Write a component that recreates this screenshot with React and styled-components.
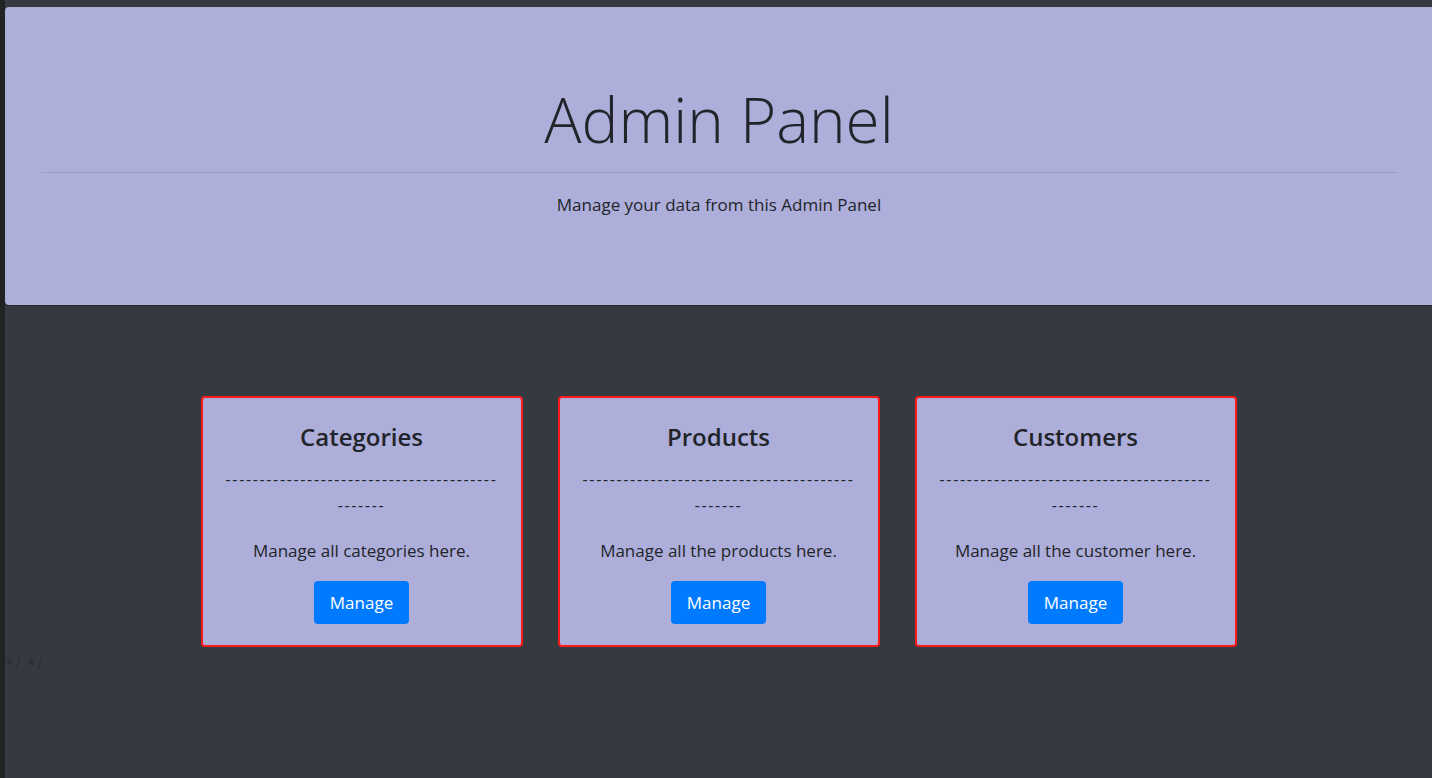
import React from "react";
import styled, { createGlobalStyle } from "styled-components";

const Global = createGlobalStyle`
  html, body { margin: 0; padding: 0; }
  body {
    background: #343a40;
    font-family: "Open Sans", "Noto Sans", sans-serif;
    color: #212529;
  }
`;

const Frame = styled.div`
  display: flex;
  min-height: 778px;
`;

const Strip = styled.div`
  width: 5px;
  flex: 0 0 5px;
  background: #222324;
`;

const Main = styled.div`
  flex: 1;
  padding-top: 7px;
  display: flex;
  flex-direction: column;
`;

const Header = styled.header`
  background: #aeaedb;
  height: 298px;
  border-radius: 4px 0 0 4px;
  box-shadow: 0 1px 0 rgba(0, 0, 0, 0.25);
  padding: 0 35px 0 36px;
  display: flex;
  flex-direction: column;
  align-items: stretch;
  text-align: center;
`;

const Title = styled.h1`
  margin: 72px 0 0;
  font-size: 62px;
  font-weight: 350;
  line-height: 1.3;
  color: #212529;
`;

const Rule = styled.hr`
  margin: 12px 0 0;
  border: 0;
  border-top: 1px solid rgba(0, 0, 0, 0.1);
`;

const Lead = styled.p`
  margin: 20px 0 0;
  font-size: 17px;
  line-height: 24px;
  color: #212529;
`;

const Cards = styled.section`
  margin-top: 91px;
  display: flex;
  justify-content: center;
  gap: 35px;
`;

const Card = styled.div`
  width: 322px;
  height: 251px;
  box-sizing: border-box;
  background: #aeaedb;
  border: 2px solid #ff1a1a;
  border-radius: 4px;
  padding: 22px 22px 0;
  display: flex;
  flex-direction: column;
  align-items: center;
  text-align: center;
`;

const CardTitle = styled.h3`
  margin: 0;
  font-size: 24px;
  font-weight: 600;
  line-height: 34px;
  color: #212529;
`;

const Dashes = styled.div`
  margin-top: 12px;
  font-size: 16px;
  line-height: 26px;
  letter-spacing: 1.65px;
  color: #212529;
`;

const CardText = styled.p`
  margin: 21px 0 0;
  font-size: 17px;
  line-height: 24px;
  color: #212529;
`;

const Button = styled.button`
  margin-top: 18px;
  width: 95px;
  height: 43px;
  border: 0;
  border-radius: 4px;
  background: #007bff;
  color: #fff;
  font-family: inherit;
  font-size: 17px;
  cursor: pointer;
`;

const Leftover = styled.div`
  margin-top: 6px;
  font-size: 16px;
  color: #2b3036;
  letter-spacing: 1px;
`;

const items = [
  { title: "Categories", text: "Manage all categories here." },
  { title: "Products", text: "Manage all the products here." },
  { title: "Customers", text: "Manage all the customer here." },
];

export default function App() {
  return (
    <>
      <Global />
      <Frame>
        <Strip />
        <Main>
          <Header>
            <Title>Admin Panel</Title>
            <Rule />
            <Lead>Manage your data from this Admin Panel</Lead>
          </Header>
          <Cards>
            {items.map((it) => (
              <Card key={it.title}>
                <CardTitle>{it.title}</CardTitle>
                <Dashes>
                  {"-".repeat(40)}
                  <br />
                  {"-".repeat(7)}
                </Dashes>
                <CardText>{it.text}</CardText>
                <Button>Manage</Button>
              </Card>
            ))}
          </Cards>
          <Leftover>*/ */</Leftover>
        </Main>
      </Frame>
    </>
  );
}
